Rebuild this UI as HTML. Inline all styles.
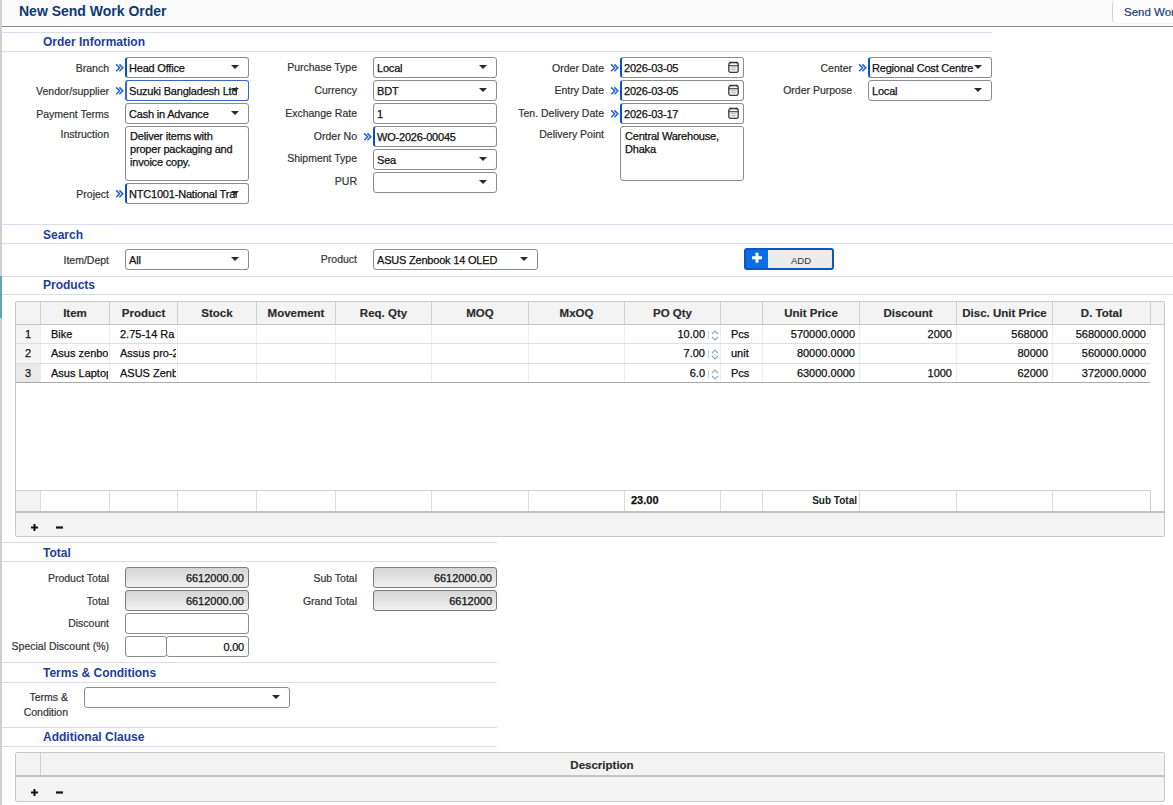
<!DOCTYPE html><html><head><meta charset="utf-8"><title>New Send Work Order</title><style>
*{box-sizing:border-box}
html,body{margin:0;padding:0;width:1173px;height:805px;overflow:hidden;background:#fff;font-family:"Liberation Sans",sans-serif;color:#111}
.a{position:absolute}
.ln{position:absolute;left:2px;height:1px;background:#dcdbee}
.sh{position:absolute;left:43px;font-size:12px;font-weight:bold;color:#1e3d9e;line-height:14px;white-space:nowrap}
.lbl{position:absolute;font-size:10.5px;color:#333;line-height:13px;text-align:right;white-space:nowrap}
.bx{position:absolute;height:21px;border:1px solid #8c8c8c;border-radius:3px;background:#fff;font-size:11px;line-height:20px;padding-left:3px;color:#111;white-space:nowrap;overflow:hidden}
.rq{border-left:2px solid #0b50c8;padding-left:2px}
.fc{border-color:#3f62cc;border-left:2px solid #3f62cc}
.ch{position:absolute;width:9px;height:10px}
.dd{position:absolute;width:0;height:0;border-left:4px solid transparent;border-right:4px solid transparent;border-top:4.5px solid #2a2a2a}
.ta{position:absolute;border:1px solid #8c8c8c;border-radius:3px;background:#fff;font-size:11px;line-height:12.8px;padding:3px 0 0 4px;color:#111;white-space:nowrap}
.ro{background:linear-gradient(#d5d5d5,#f0f0f0);text-align:right;padding-right:4px;border-color:#7a7a7a}
.cal{position:absolute;width:11px;height:12px}
.th{font-size:11.5px;font-weight:bold;color:#2a2a2a;line-height:14px;text-align:center;white-space:nowrap}
.td{font-size:11px;color:#111;line-height:13px;white-space:nowrap}
.lbl{-webkit-text-stroke:0.2px currentColor}.bx,.ta,.td{-webkit-text-stroke:0.25px currentColor}.bx,.ta{letter-spacing:-0.2px}.ro{letter-spacing:0}.th{-webkit-text-stroke:0.15px currentColor}
</style></head><body>
<div class="a" style="left:0;top:0;width:2px;height:805px;background:#cdd1d1"></div>
<div class="a" style="left:0;top:276px;width:2px;height:42px;background:#5fa6b5"></div>
<div class="a" style="left:2px;top:0;width:1171px;height:27px;background:#fafafa;border-bottom:1px solid #8a8a8a"></div>
<div class="a" style="left:19px;top:3px;font-size:14px;font-weight:bold;color:#0d3a75;line-height:16px;white-space:nowrap">New Send Work Order</div>
<div class="a" style="left:1112px;top:-1px;width:70px;height:25px;border:1px solid #d2d2d2;border-top-color:#f3f3f3;border-bottom-color:#f3f3f3;border-right:none;border-radius:5px 0 0 5px;background:#fdfdfd"></div>
<div class="a" style="left:1124px;top:5px;font-size:11.5px;color:#173d77;line-height:14px;white-space:nowrap;-webkit-text-stroke:0.2px #173d77">Send Work Order</div>
<div class="ln" style="top:32px;width:990px"></div>
<div class="sh" style="top:35px">Order Information</div>
<div class="ln" style="top:51px;width:990px"></div>
<div class="lbl" style="right:1064px;top:62px;">Branch</div>
<svg class="ch" style="left:115px;top:63px" viewBox="0 0 9 10"><path d="M1.2 1.4L4.6 4.8L1.2 8.2M4.4 1.4L7.8 4.8L4.4 8.2" stroke="#1d62d6" stroke-width="1.5" fill="none"/></svg>
<div class="bx  rq" style="left:125px;top:57px;width:124px;height:21px;"><span style="display:block;overflow:hidden;margin-right:11px">Head Office</span></div>
<div class="dd" style="left:231px;top:65px"></div>
<div class="lbl" style="right:1064px;top:85px;">Vendor/supplier</div>
<svg class="ch" style="left:115px;top:86px" viewBox="0 0 9 10"><path d="M1.2 1.4L4.6 4.8L1.2 8.2M4.4 1.4L7.8 4.8L4.4 8.2" stroke="#1d62d6" stroke-width="1.5" fill="none"/></svg>
<div class="bx fc rq" style="left:125px;top:80px;width:124px;height:21px;"><span style="display:block;overflow:hidden;margin-right:11px">Suzuki Bangladesh Ltd</span></div>
<div class="dd" style="left:231px;top:88px"></div>
<div class="lbl" style="right:1064px;top:108px;">Payment Terms</div>
<div class="bx " style="left:125px;top:103px;width:124px;height:21px;"><span style="display:block;overflow:hidden;margin-right:11px">Cash in Advance</span></div>
<div class="dd" style="left:231px;top:111px"></div>
<div class="lbl" style="right:1064px;top:128px;">Instruction</div>
<div class="ta" style="left:125px;top:126px;width:124px;height:55px">Deliver items with<br>proper packaging and<br>invoice copy.</div>
<div class="lbl" style="right:1064px;top:188px;">Project</div>
<svg class="ch" style="left:115px;top:189px" viewBox="0 0 9 10"><path d="M1.2 1.4L4.6 4.8L1.2 8.2M4.4 1.4L7.8 4.8L4.4 8.2" stroke="#1d62d6" stroke-width="1.5" fill="none"/></svg>
<div class="bx  rq" style="left:125px;top:183px;width:124px;height:21px;"><span style="display:block;overflow:hidden;margin-right:11px">NTC1001-National Trade</span></div>
<div class="dd" style="left:231px;top:191px"></div>
<div class="lbl" style="right:816px;top:61px;">Purchase Type</div>
<div class="bx " style="left:373px;top:57px;width:124px;height:21px;"><span style="display:block;overflow:hidden;margin-right:11px">Local</span></div>
<div class="dd" style="left:479px;top:65px"></div>
<div class="lbl" style="right:816px;top:84px;">Currency</div>
<div class="bx " style="left:373px;top:80px;width:124px;height:21px;"><span style="display:block;overflow:hidden;margin-right:11px">BDT</span></div>
<div class="dd" style="left:479px;top:88px"></div>
<div class="lbl" style="right:816px;top:107px;">Exchange Rate</div>
<div class="bx " style="left:373px;top:103px;width:124px;height:21px;">1</div>
<div class="lbl" style="right:816px;top:130px;">Order No</div>
<svg class="ch" style="left:363px;top:132px" viewBox="0 0 9 10"><path d="M1.2 1.4L4.6 4.8L1.2 8.2M4.4 1.4L7.8 4.8L4.4 8.2" stroke="#1d62d6" stroke-width="1.5" fill="none"/></svg>
<div class="bx  rq" style="left:373px;top:126px;width:124px;height:21px;">WO-2026-00045</div>
<div class="lbl" style="right:816px;top:152px;">Shipment Type</div>
<div class="bx " style="left:373px;top:149px;width:124px;height:21px;"><span style="display:block;overflow:hidden;margin-right:11px">Sea</span></div>
<div class="dd" style="left:479px;top:157px"></div>
<div class="lbl" style="right:816px;top:175px;">PUR</div>
<div class="bx " style="left:373px;top:172px;width:124px;height:21px;"><span style="display:block;overflow:hidden;margin-right:11px"></span></div>
<div class="dd" style="left:479px;top:180px"></div>
<div class="lbl" style="right:569px;top:62px;">Order Date</div>
<svg class="ch" style="left:610px;top:63px" viewBox="0 0 9 10"><path d="M1.2 1.4L4.6 4.8L1.2 8.2M4.4 1.4L7.8 4.8L4.4 8.2" stroke="#1d62d6" stroke-width="1.5" fill="none"/></svg>
<div class="bx  rq" style="left:620px;top:57px;width:124px;height:21px;">2026-03-05</div>
<svg class="cal" style="left:728px;top:61px" viewBox="0 0 11 12"><rect x="0.8" y="1.5" width="9.4" height="9.9" rx="2" fill="#f7f7f7" stroke="#3a3a3a" stroke-width="1.3"/><path d="M0.8 4.7H10.2" stroke="#3a3a3a" stroke-width="1.1"/><path d="M2.3 6.5H8.7M2.3 8.5H8.7M4.5 5.5V10M6.5 5.5V10" stroke="#c4c4c4" stroke-width="0.9"/><path d="M2.6 0.7v1.6M8.4 0.7v1.6" stroke="#222" stroke-width="1.1"/></svg>
<div class="lbl" style="right:569px;top:84px;">Entry Date</div>
<svg class="ch" style="left:610px;top:86px" viewBox="0 0 9 10"><path d="M1.2 1.4L4.6 4.8L1.2 8.2M4.4 1.4L7.8 4.8L4.4 8.2" stroke="#1d62d6" stroke-width="1.5" fill="none"/></svg>
<div class="bx  rq" style="left:620px;top:80px;width:124px;height:21px;">2026-03-05</div>
<svg class="cal" style="left:728px;top:84px" viewBox="0 0 11 12"><rect x="0.8" y="1.5" width="9.4" height="9.9" rx="2" fill="#f7f7f7" stroke="#3a3a3a" stroke-width="1.3"/><path d="M0.8 4.7H10.2" stroke="#3a3a3a" stroke-width="1.1"/><path d="M2.3 6.5H8.7M2.3 8.5H8.7M4.5 5.5V10M6.5 5.5V10" stroke="#c4c4c4" stroke-width="0.9"/><path d="M2.6 0.7v1.6M8.4 0.7v1.6" stroke="#222" stroke-width="1.1"/></svg>
<div class="lbl" style="right:569px;top:107px;">Ten. Delivery Date</div>
<svg class="ch" style="left:610px;top:109px" viewBox="0 0 9 10"><path d="M1.2 1.4L4.6 4.8L1.2 8.2M4.4 1.4L7.8 4.8L4.4 8.2" stroke="#1d62d6" stroke-width="1.5" fill="none"/></svg>
<div class="bx  rq" style="left:620px;top:103px;width:124px;height:21px;">2026-03-17</div>
<svg class="cal" style="left:728px;top:107px" viewBox="0 0 11 12"><rect x="0.8" y="1.5" width="9.4" height="9.9" rx="2" fill="#f7f7f7" stroke="#3a3a3a" stroke-width="1.3"/><path d="M0.8 4.7H10.2" stroke="#3a3a3a" stroke-width="1.1"/><path d="M2.3 6.5H8.7M2.3 8.5H8.7M4.5 5.5V10M6.5 5.5V10" stroke="#c4c4c4" stroke-width="0.9"/><path d="M2.6 0.7v1.6M8.4 0.7v1.6" stroke="#222" stroke-width="1.1"/></svg>
<div class="lbl" style="right:569px;top:128px;">Delivery Point</div>
<div class="ta" style="left:620px;top:126px;width:124px;height:55px">Central Warehouse,<br>Dhaka</div>
<div class="lbl" style="right:321px;top:62px;">Center</div>
<svg class="ch" style="left:858px;top:63px" viewBox="0 0 9 10"><path d="M1.2 1.4L4.6 4.8L1.2 8.2M4.4 1.4L7.8 4.8L4.4 8.2" stroke="#1d62d6" stroke-width="1.5" fill="none"/></svg>
<div class="bx  rq" style="left:868px;top:57px;width:124px;height:21px;"><span style="display:block;overflow:hidden;margin-right:11px">Regional Cost Centre</span></div>
<div class="dd" style="left:974px;top:65px"></div>
<div class="lbl" style="right:321px;top:84px;">Order Purpose</div>
<div class="bx " style="left:868px;top:80px;width:124px;height:21px;"><span style="display:block;overflow:hidden;margin-right:11px">Local</span></div>
<div class="dd" style="left:974px;top:88px"></div>
<div class="ln" style="top:224px;width:1171px"></div>
<div class="sh" style="top:228px">Search</div>
<div class="ln" style="top:243px;width:1171px"></div>
<div class="lbl" style="right:1064px;top:254px;">Item/Dept</div>
<div class="bx " style="left:125px;top:249px;width:124px;height:21px;"><span style="display:block;overflow:hidden;margin-right:11px">All</span></div>
<div class="dd" style="left:231px;top:257px"></div>
<div class="lbl" style="right:816px;top:253px;">Product</div>
<div class="bx " style="left:373px;top:249px;width:165px;height:21px;"><span style="display:block;overflow:hidden;margin-right:11px">ASUS Zenbook 14 OLED</span></div>
<div class="dd" style="left:520px;top:257px"></div>
<div class="a" style="left:744px;top:248px;width:90px;height:22px;border:2px solid #0a58c0;border-radius:3px;background:#ececec"></div>
<div class="a" style="left:746px;top:250px;width:22px;height:18px;background:#0b6ee6"></div>
<svg class="a" style="left:751px;top:252px" width="12" height="12" viewBox="0 0 12 12"><path d="M6 0.8V10.8M1 5.8H11" stroke="#fff" stroke-width="3"/></svg>
<div class="a" style="left:768px;top:254px;width:66px;text-align:center;font-size:9.5px;line-height:13px;color:#333">ADD</div>
<div class="ln" style="top:276px;width:1171px"></div>
<div class="sh" style="top:278px">Products</div>
<div class="ln" style="top:294px;width:1171px"></div>
<div class="a" style="left:15px;top:301px;width:1150px;height:236px;border:1px solid #c9c9c9;border-radius:2px;background:#fff"></div>
<div class="a" style="left:16px;top:302px;width:1148px;height:23px;background:#f3f3f3;border-bottom:1px solid #c4c4c4"></div>
<div class="a" style="left:40px;top:302px;width:1px;height:23px;background:#cfcfcf"></div>
<div class="a" style="left:109px;top:302px;width:1px;height:23px;background:#cfcfcf"></div>
<div class="a" style="left:177px;top:302px;width:1px;height:23px;background:#cfcfcf"></div>
<div class="a" style="left:256px;top:302px;width:1px;height:23px;background:#cfcfcf"></div>
<div class="a" style="left:335px;top:302px;width:1px;height:23px;background:#cfcfcf"></div>
<div class="a" style="left:431px;top:302px;width:1px;height:23px;background:#cfcfcf"></div>
<div class="a" style="left:528px;top:302px;width:1px;height:23px;background:#cfcfcf"></div>
<div class="a" style="left:624px;top:302px;width:1px;height:23px;background:#cfcfcf"></div>
<div class="a" style="left:720px;top:302px;width:1px;height:23px;background:#cfcfcf"></div>
<div class="a" style="left:762px;top:302px;width:1px;height:23px;background:#cfcfcf"></div>
<div class="a" style="left:859px;top:302px;width:1px;height:23px;background:#cfcfcf"></div>
<div class="a" style="left:956px;top:302px;width:1px;height:23px;background:#cfcfcf"></div>
<div class="a" style="left:1052px;top:302px;width:1px;height:23px;background:#cfcfcf"></div>
<div class="a" style="left:1150px;top:302px;width:1px;height:23px;background:#cfcfcf"></div>
<div class="a th" style="left:41px;top:306px;width:68px">Item</div>
<div class="a th" style="left:110px;top:306px;width:67px">Product</div>
<div class="a th" style="left:178px;top:306px;width:78px">Stock</div>
<div class="a th" style="left:257px;top:306px;width:78px">Movement</div>
<div class="a th" style="left:336px;top:306px;width:95px">Req. Qty</div>
<div class="a th" style="left:432px;top:306px;width:96px">MOQ</div>
<div class="a th" style="left:529px;top:306px;width:95px">MxOQ</div>
<div class="a th" style="left:625px;top:306px;width:95px">PO Qty</div>
<div class="a th" style="left:763px;top:306px;width:96px">Unit Price</div>
<div class="a th" style="left:860px;top:306px;width:96px">Discount</div>
<div class="a th" style="left:957px;top:306px;width:95px">Disc. Unit Price</div>
<div class="a th" style="left:1053px;top:306px;width:97px">D. Total</div>
<div class="a" style="left:16px;top:325px;width:24px;height:18px;background:#f4f4f4"></div>
<div class="a" style="left:16px;top:343px;width:1134px;height:1px;background:#dedede"></div>
<div class="a" style="left:40px;top:325px;width:1px;height:18px;background:#ececec"></div>
<div class="a" style="left:109px;top:325px;width:1px;height:18px;background:#ececec"></div>
<div class="a" style="left:177px;top:325px;width:1px;height:18px;background:#ececec"></div>
<div class="a" style="left:256px;top:325px;width:1px;height:18px;background:#ececec"></div>
<div class="a" style="left:335px;top:325px;width:1px;height:18px;background:#ececec"></div>
<div class="a" style="left:431px;top:325px;width:1px;height:18px;background:#ececec"></div>
<div class="a" style="left:528px;top:325px;width:1px;height:18px;background:#ececec"></div>
<div class="a" style="left:624px;top:325px;width:1px;height:18px;background:#ececec"></div>
<div class="a" style="left:720px;top:325px;width:1px;height:18px;background:#ececec"></div>
<div class="a" style="left:762px;top:325px;width:1px;height:18px;background:#ececec"></div>
<div class="a" style="left:859px;top:325px;width:1px;height:18px;background:#ececec"></div>
<div class="a" style="left:956px;top:325px;width:1px;height:18px;background:#ececec"></div>
<div class="a" style="left:1052px;top:325px;width:1px;height:18px;background:#ececec"></div>
<div class="a td" style="left:16px;top:328px;width:24px;text-align:center">1</div>
<div class="a td" style="left:51px;top:328px;width:57px;overflow:hidden">Bike</div>
<div class="a td" style="left:120px;top:328px;width:56px;overflow:hidden">2.75-14 Ra</div>
<div class="a td" style="left:625px;top:328px;width:80px;text-align:right">10.00</div>
<div class="a" style="left:708px;top:331px;width:1px;height:8px;background:#cfcfcf"></div>
<svg class="a" style="left:711px;top:330px" width="8" height="11" viewBox="0 0 8 11"><path d="M1 4L4 1L7 4M1 7L4 10L7 7" stroke="#8fa7c2" stroke-width="1.1" fill="none"/></svg>
<div class="a td" style="left:731px;top:328px">Pcs</div>
<div class="a td" style="left:763px;top:328px;width:92px;text-align:right">570000.0000</div>
<div class="a td" style="left:860px;top:328px;width:92px;text-align:right">2000</div>
<div class="a td" style="left:957px;top:328px;width:91px;text-align:right">568000</div>
<div class="a td" style="left:1053px;top:328px;width:93px;text-align:right">5680000.0000</div>
<div class="a" style="left:16px;top:344px;width:24px;height:19px;background:#f4f4f4"></div>
<div class="a" style="left:16px;top:363px;width:1134px;height:1px;background:#dedede"></div>
<div class="a" style="left:40px;top:344px;width:1px;height:19px;background:#ececec"></div>
<div class="a" style="left:109px;top:344px;width:1px;height:19px;background:#ececec"></div>
<div class="a" style="left:177px;top:344px;width:1px;height:19px;background:#ececec"></div>
<div class="a" style="left:256px;top:344px;width:1px;height:19px;background:#ececec"></div>
<div class="a" style="left:335px;top:344px;width:1px;height:19px;background:#ececec"></div>
<div class="a" style="left:431px;top:344px;width:1px;height:19px;background:#ececec"></div>
<div class="a" style="left:528px;top:344px;width:1px;height:19px;background:#ececec"></div>
<div class="a" style="left:624px;top:344px;width:1px;height:19px;background:#ececec"></div>
<div class="a" style="left:720px;top:344px;width:1px;height:19px;background:#ececec"></div>
<div class="a" style="left:762px;top:344px;width:1px;height:19px;background:#ececec"></div>
<div class="a" style="left:859px;top:344px;width:1px;height:19px;background:#ececec"></div>
<div class="a" style="left:956px;top:344px;width:1px;height:19px;background:#ececec"></div>
<div class="a" style="left:1052px;top:344px;width:1px;height:19px;background:#ececec"></div>
<div class="a td" style="left:16px;top:347px;width:24px;text-align:center">2</div>
<div class="a td" style="left:51px;top:347px;width:57px;overflow:hidden">Asus zenbook</div>
<div class="a td" style="left:120px;top:347px;width:56px;overflow:hidden">Assus pro-2</div>
<div class="a td" style="left:625px;top:347px;width:80px;text-align:right">7.00</div>
<div class="a" style="left:708px;top:350px;width:1px;height:8px;background:#cfcfcf"></div>
<svg class="a" style="left:711px;top:349px" width="8" height="11" viewBox="0 0 8 11"><path d="M1 4L4 1L7 4M1 7L4 10L7 7" stroke="#8fa7c2" stroke-width="1.1" fill="none"/></svg>
<div class="a td" style="left:731px;top:347px">unit</div>
<div class="a td" style="left:763px;top:347px;width:92px;text-align:right">80000.0000</div>
<div class="a td" style="left:957px;top:347px;width:91px;text-align:right">80000</div>
<div class="a td" style="left:1053px;top:347px;width:93px;text-align:right">560000.0000</div>
<div class="a" style="left:16px;top:364px;width:24px;height:18px;background:#e9e9e9"></div>
<div class="a" style="left:16px;top:382px;width:1134px;height:1px;background:#a9a9a9"></div>
<div class="a" style="left:40px;top:364px;width:1px;height:18px;background:#ececec"></div>
<div class="a" style="left:109px;top:364px;width:1px;height:18px;background:#ececec"></div>
<div class="a" style="left:177px;top:364px;width:1px;height:18px;background:#ececec"></div>
<div class="a" style="left:256px;top:364px;width:1px;height:18px;background:#ececec"></div>
<div class="a" style="left:335px;top:364px;width:1px;height:18px;background:#ececec"></div>
<div class="a" style="left:431px;top:364px;width:1px;height:18px;background:#ececec"></div>
<div class="a" style="left:528px;top:364px;width:1px;height:18px;background:#ececec"></div>
<div class="a" style="left:624px;top:364px;width:1px;height:18px;background:#ececec"></div>
<div class="a" style="left:720px;top:364px;width:1px;height:18px;background:#ececec"></div>
<div class="a" style="left:762px;top:364px;width:1px;height:18px;background:#ececec"></div>
<div class="a" style="left:859px;top:364px;width:1px;height:18px;background:#ececec"></div>
<div class="a" style="left:956px;top:364px;width:1px;height:18px;background:#ececec"></div>
<div class="a" style="left:1052px;top:364px;width:1px;height:18px;background:#ececec"></div>
<div class="a td" style="left:16px;top:367px;width:24px;text-align:center">3</div>
<div class="a td" style="left:51px;top:367px;width:57px;overflow:hidden">Asus Laptop</div>
<div class="a td" style="left:120px;top:367px;width:56px;overflow:hidden">ASUS Zenbook</div>
<div class="a td" style="left:625px;top:367px;width:80px;text-align:right">6.0</div>
<div class="a" style="left:708px;top:370px;width:1px;height:8px;background:#cfcfcf"></div>
<svg class="a" style="left:711px;top:369px" width="8" height="11" viewBox="0 0 8 11"><path d="M1 4L4 1L7 4M1 7L4 10L7 7" stroke="#8fa7c2" stroke-width="1.1" fill="none"/></svg>
<div class="a td" style="left:731px;top:367px">Pcs</div>
<div class="a td" style="left:763px;top:367px;width:92px;text-align:right">63000.0000</div>
<div class="a td" style="left:860px;top:367px;width:92px;text-align:right">1000</div>
<div class="a td" style="left:957px;top:367px;width:91px;text-align:right">62000</div>
<div class="a td" style="left:1053px;top:367px;width:93px;text-align:right">372000.0000</div>
<div class="a" style="left:16px;top:490px;width:1135px;height:22px;border-top:1px solid #cdcdcd;border-right:1px solid #cdcdcd;background:#fff"></div>
<div class="a" style="left:16px;top:491px;width:24px;height:20px;background:#f3f3f3"></div>
<div class="a" style="left:40px;top:491px;width:1px;height:20px;background:#dcdcdc"></div>
<div class="a" style="left:109px;top:491px;width:1px;height:20px;background:#dcdcdc"></div>
<div class="a" style="left:177px;top:491px;width:1px;height:20px;background:#dcdcdc"></div>
<div class="a" style="left:256px;top:491px;width:1px;height:20px;background:#dcdcdc"></div>
<div class="a" style="left:335px;top:491px;width:1px;height:20px;background:#dcdcdc"></div>
<div class="a" style="left:431px;top:491px;width:1px;height:20px;background:#dcdcdc"></div>
<div class="a" style="left:528px;top:491px;width:1px;height:20px;background:#dcdcdc"></div>
<div class="a" style="left:624px;top:491px;width:1px;height:20px;background:#dcdcdc"></div>
<div class="a" style="left:720px;top:491px;width:1px;height:20px;background:#dcdcdc"></div>
<div class="a" style="left:762px;top:491px;width:1px;height:20px;background:#dcdcdc"></div>
<div class="a" style="left:859px;top:491px;width:1px;height:20px;background:#dcdcdc"></div>
<div class="a" style="left:956px;top:491px;width:1px;height:20px;background:#dcdcdc"></div>
<div class="a" style="left:1052px;top:491px;width:1px;height:20px;background:#dcdcdc"></div>
<div class="a" style="left:16px;top:511px;width:1148px;height:2px;background:#c2c2c2"></div>
<div class="a td" style="left:631px;top:494px;font-weight:bold">23.00</div>
<div class="a" style="left:762px;top:495px;width:95px;text-align:right;font-size:10px;line-height:12px;font-weight:bold;color:#222">Sub Total</div>
<div class="a" style="left:16px;top:513px;width:1148px;height:23px;background:#f4f4f4"></div>
<svg class="a" style="left:30px;top:523px" width="9" height="9" viewBox="0 0 9 9"><path d="M4.5 1V8M1 4.5H8" stroke="#111" stroke-width="2"/></svg>
<svg class="a" style="left:55px;top:523px" width="9" height="9" viewBox="0 0 9 9"><path d="M1 4.5H8" stroke="#111" stroke-width="2.2"/></svg>
<div class="ln" style="top:542px;width:495px"></div>
<div class="sh" style="top:546px">Total</div>
<div class="ln" style="top:561px;width:495px"></div>
<div class="lbl" style="right:1064px;top:572px;">Product Total</div>
<div class="bx ro" style="left:125px;top:567px;width:124px;height:21px;">6612000.00</div>
<div class="lbl" style="right:816px;top:572px;">Sub Total</div>
<div class="bx ro" style="left:373px;top:567px;width:124px;height:21px;">6612000.00</div>
<div class="lbl" style="right:1064px;top:595px;">Total</div>
<div class="bx ro" style="left:125px;top:590px;width:124px;height:21px;">6612000.00</div>
<div class="lbl" style="right:816px;top:595px;">Grand Total</div>
<div class="bx ro" style="left:373px;top:590px;width:124px;height:21px;">6612000</div>
<div class="lbl" style="right:1064px;top:617px;">Discount</div>
<div class="bx " style="left:125px;top:613px;width:124px;height:21px;"></div>
<div class="lbl" style="right:1064px;top:640px;">Special Discount (%)</div>
<div class="bx " style="left:125px;top:636px;width:42px;height:21px;"></div>
<div class="bx " style="left:166px;top:636px;width:83px;height:21px;text-align:right;padding-right:4px">0.00</div>
<div class="ln" style="top:662px;width:495px"></div>
<div class="sh" style="top:666px">Terms &amp; Conditions</div>
<div class="ln" style="top:682px;width:495px"></div>
<div class="lbl" style="right:1105px;top:690px;text-align:right;line-height:15px">Terms &amp;<br>Condition</div>
<div class="bx " style="left:84px;top:687px;width:206px;height:21px;"><span style="display:block;overflow:hidden;margin-right:11px"></span></div>
<div class="dd" style="left:272px;top:695px"></div>
<div class="ln" style="top:727px;width:495px"></div>
<div class="sh" style="top:730px">Additional Clause</div>
<div class="ln" style="top:746px;width:495px"></div>
<div class="a" style="left:15px;top:752px;width:1150px;height:50px;border:1px solid #c9c9c9;border-radius:2px;background:#f4f4f4"></div>
<div class="a" style="left:16px;top:753px;width:1148px;height:24px;background:#f3f3f3;border-bottom:2px solid #c4c4c4"></div>
<div class="a" style="left:40px;top:753px;width:1px;height:22px;background:#cfcfcf"></div>
<div class="a th" style="left:41px;top:758px;width:1122px">Description</div>
<svg class="a" style="left:30px;top:788px" width="9" height="9" viewBox="0 0 9 9"><path d="M4.5 1V8M1 4.5H8" stroke="#111" stroke-width="2"/></svg>
<svg class="a" style="left:55px;top:788px" width="9" height="9" viewBox="0 0 9 9"><path d="M1 4.5H8" stroke="#111" stroke-width="2.2"/></svg>
</body></html>
